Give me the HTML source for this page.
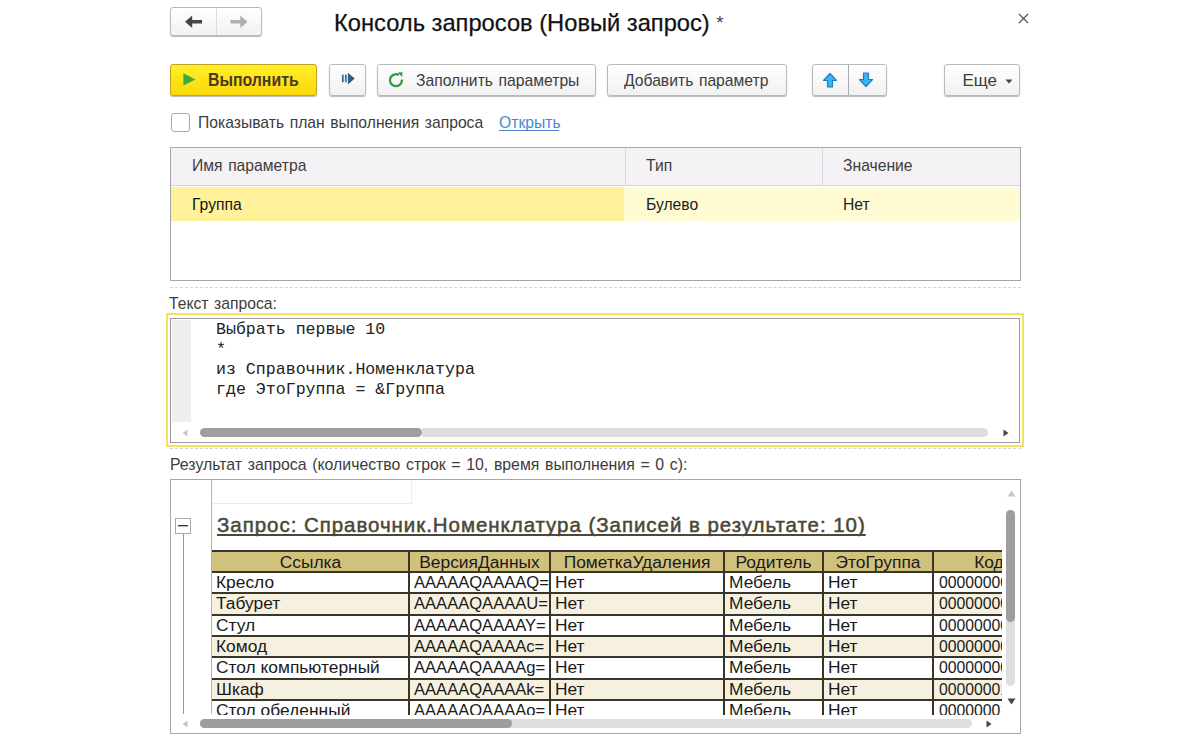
<!DOCTYPE html>
<html lang="ru"><head><meta charset="utf-8"><title>Консоль запросов</title>
<style>
*{box-sizing:border-box;margin:0;padding:0}
html,body{width:1200px;height:744px;overflow:hidden;background:#fff}
body{font-family:"Liberation Sans",sans-serif;color:#333;position:relative;font-size:15px}
.abs{position:absolute}
.btn{position:absolute;top:64px;height:32px;border:1px solid #b9b9b9;border-radius:3px;background:linear-gradient(#ffffff,#f1f1f1);box-shadow:0 1px 1px rgba(0,0,0,.28)}
.t{position:absolute;white-space:nowrap;transform-origin:0 0}
.u{word-spacing:1.3px}
.hd{font-size:20.5px;line-height:26px;color:#4a4836;letter-spacing:.95px;-webkit-text-stroke:.5px #4a4836;text-decoration:underline;text-decoration-thickness:1.5px;text-underline-offset:2px;text-decoration-skip-ink:none}
.ct{font-size:16px;line-height:20px;color:#1a1a1a;transform:scaleX(1.085)}
.b64{transform:scaleX(1.035)}
.cd{transform:scaleX(.985);margin-left:1px}
</style></head><body>

<div class="btn" style="left:170px;top:7px;width:92px;height:29px"></div>
<div class="abs" style="left:216px;top:8px;width:1px;height:27px;background:#dcdcdc"></div>
<svg class="abs" style="left:184px;top:14px" width="20" height="16" viewBox="0 0 20 16"><path d="M1 7.8 L8.2 1.6 L8.2 6 L18 6 L18 9.6 L8.2 9.6 L8.2 14 Z" fill="#454545"/></svg>
<svg class="abs" style="left:229px;top:14px" width="20" height="16" viewBox="0 0 20 16"><path d="M18.5 7.8 L11.3 1.6 L11.3 6 L1.5 6 L1.5 9.6 L11.3 9.6 L11.3 14 Z" fill="#b0b0b0"/></svg>

<div class="t " style="left:333.8px;top:9.08px;font-size:24px;line-height:28px;color:#111;transform:scaleX(0.987);-webkit-text-stroke:.25px #111;">Консоль запросов (Новый запрос) <span style="font-size:19px;color:#444;-webkit-text-stroke:0;position:relative;top:-2px">*</span></div>
<svg class="abs" style="left:1018px;top:13px" width="11" height="11" viewBox="0 0 11 11"><path d="M1 1 L10 10 M10 1 L1 10" stroke="#555" stroke-width="1.3" fill="none"/></svg>
<div class="btn" style="left:170px;width:147px;border-color:#c2a223;background:linear-gradient(#fff02c,#fee317 50%,#fbd90c)"></div>
<div class="t " style="left:208px;top:69.80px;font-size:17.6px;line-height:20px;color:#4a3c1c;transform:scaleX(0.9);font-weight:bold;">Выполнить</div>
<svg class="abs" style="left:182px;top:72px" width="15" height="15" viewBox="0 0 15 15"><path d="M1.4 1.2 L13.4 7.4 L1.4 13.6 Z" fill="#35ad3a"/></svg>
<div class="btn" style="left:329px;width:37px"></div>
<svg class="abs" style="left:340px;top:71px" width="16" height="16" viewBox="0 0 16 16"><rect x="1.9" y="3.6" width="1.85" height="7.6" fill="#41709e"/><rect x="4.9" y="3.6" width="1.85" height="7.6" fill="#41709e"/><path d="M7.9 1.75 L14.7 7.6 L7.9 13.4 Z" fill="#2f5b88"/></svg>
<div class="btn" style="left:377px;width:219px"></div>
<svg class="abs" style="left:387px;top:71px" width="18" height="18" viewBox="0 0 18 18"><path d="M11.9 4.0 A6 6 0 1 0 14.9 8.7" stroke="#2f9a3e" stroke-width="2.3" fill="none"/><path d="M10.9 1.5 L15.5 1.3 L15.1 6.0 Z" fill="#2f9a3e"/></svg>
<div class="btn" style="left:607px;width:180px"></div>
<div class="btn" style="left:812px;width:75px"></div>
<div class="abs" style="left:848px;top:65px;width:1px;height:30px;background:#ababab"></div>
<svg class="abs" style="left:822px;top:72px" width="16" height="17" viewBox="0 0 16 17"><path d="M8 1.5 L14.5 8.5 L10.5 8.5 L10.5 15 L5.5 15 L5.5 8.5 L1.5 8.5 Z" fill="#3db4f2" stroke="#1b7fc4" stroke-width="1.2" stroke-linejoin="round"/></svg>
<svg class="abs" style="left:858px;top:71px" width="16" height="17" viewBox="0 0 16 17"><path d="M8 15.5 L14.5 8.5 L10.5 8.5 L10.5 2 L5.5 2 L5.5 8.5 L1.5 8.5 Z" fill="#3db4f2" stroke="#1b7fc4" stroke-width="1.2" stroke-linejoin="round"/></svg>
<div class="btn" style="left:944px;width:76px"></div>
<svg class="abs" style="left:1005px;top:79px" width="8" height="5" viewBox="0 0 8 5"><path d="M0.5 0.5 L7.5 0.5 L4 4.5 Z" fill="#444"/></svg>

<div class="t u" style="left:415.6px;top:71.15px;font-size:16.6px;line-height:20px;color:#3c3c3c;transform:scaleX(0.945);">Заполнить параметры</div>
<div class="t u" style="left:624.4px;top:71.15px;font-size:16.6px;line-height:20px;color:#3c3c3c;transform:scaleX(0.945);">Добавить параметр</div>
<div class="t u" style="left:962.4px;top:71.01px;font-size:17px;line-height:20px;color:#3c3c3c;transform:scaleX(1.0);">Еще</div>
<div class="abs" style="left:171px;top:113px;width:19px;height:19px;border:1px solid #a9a9a9;border-radius:3px;background:#fff"></div>
<div class="t u" style="left:198px;top:112.75px;font-size:16.6px;line-height:20px;color:#3c3c3c;transform:scaleX(0.945);">Показывать план выполнения запроса</div>
<div class="t u" style="left:499px;top:112.75px;font-size:16.6px;line-height:20px;color:#4a86d0;transform:scaleX(0.945);">Открыть</div>
<div class="abs" style="left:499px;top:130px;width:60px;height:1px;background:#4a86d0"></div>
<div class="abs" style="left:170px;top:147px;width:851px;height:134px;border:1px solid #a6a6a6;background:#fff"></div>
<div class="abs" style="left:171px;top:148px;width:849px;height:38px;background:#f4f2f5;border-bottom:1px solid #d6d3dc"></div>
<div class="abs" style="left:625px;top:148px;width:1px;height:37px;background:#d9d6de"></div>
<div class="abs" style="left:822px;top:148px;width:1px;height:37px;background:#d9d6de"></div>
<div class="abs" style="left:171px;top:187px;width:849px;height:34px;background:#fffbd2"></div>
<div class="abs" style="left:171px;top:187px;width:453px;height:34px;background:#fff29a"></div>

<div class="t u" style="left:191.6px;top:156.35px;font-size:16.6px;line-height:20px;color:#3c3c3c;transform:scaleX(0.945);">Имя параметра</div>
<div class="t u" style="left:646px;top:156.35px;font-size:16.6px;line-height:20px;color:#3c3c3c;transform:scaleX(0.945);">Тип</div>
<div class="t u" style="left:843px;top:156.35px;font-size:16.6px;line-height:20px;color:#3c3c3c;transform:scaleX(0.945);">Значение</div>
<div class="t u" style="left:191.6px;top:194.55px;font-size:16.6px;line-height:20px;color:#111;transform:scaleX(0.945);">Группа</div>
<div class="t u" style="left:646px;top:194.55px;font-size:16.6px;line-height:20px;color:#222;transform:scaleX(0.945);">Булево</div>
<div class="t u" style="left:843px;top:194.55px;font-size:16.6px;line-height:20px;color:#222;transform:scaleX(0.945);">Нет</div>
<div class="abs" style="left:170px;top:287px;width:851px;height:0;border-top:1px dashed #d4d4d4"></div>
<div class="t u" style="left:169.2px;top:293.55px;font-size:16.6px;line-height:20px;color:#3c3c3c;transform:scaleX(0.945);">Текст запроса:</div>
<div class="abs" style="left:166px;top:313px;width:858px;height:134px;border:2px solid #f4e25e;background:#fff"></div>
<div class="abs" style="left:170px;top:318px;width:850px;height:125px;border:1px solid #9a9a9a;background:#fff"></div>
<div class="abs" style="left:172px;top:320px;width:19px;height:102px;background:#efefef"></div>
<pre class="abs" style="left:216px;top:320.3px;font-family:'Liberation Mono',monospace;font-size:16.6px;line-height:20px;color:#222">Выбрать первые 10
*
из Справочник.Номенклатура
где ЭтоГруппа = &amp;Группа</pre>
<div class="abs" style="left:200px;top:428px;width:222px;height:9px;border-radius:5px;background:#9e9e9e"></div>
<div class="abs" style="left:422px;top:428px;width:566px;height:9px;border-radius:0 5px 5px 0;background:#dedede"></div>
<svg class="abs" style="left:182px;top:429px" width="6" height="8" viewBox="0 0 6 8"><path d="M5.5 0.5 L0.5 4 L5.5 7.5 Z" fill="#c4c4c4"/></svg>
<svg class="abs" style="left:1003px;top:429px" width="6" height="8" viewBox="0 0 6 8"><path d="M0.5 0.5 L5.5 4 L0.5 7.5 Z" fill="#444"/></svg>
<div class="abs" style="left:170px;top:448px;width:851px;height:0;border-top:1px dashed #d4d4d4"></div>

<div class="t u" style="left:170.2px;top:455.15px;font-size:16.6px;line-height:20px;color:#3c3c3c;transform:scaleX(0.954);">Результат запроса (количество строк = 10, время выполнения = 0 с):</div>
<div class="abs" style="left:170px;top:479px;width:851px;height:255px;border:1px solid #a6a6a6;background:#fff"></div>
<div class="abs" style="left:211px;top:480px;width:1px;height:234px;background:#b5b5b5"></div>
<div class="abs" style="left:212px;top:480px;width:200px;height:24px;border-right:1px solid #ececec;border-bottom:1px solid #ececec"></div>
<div class="abs" style="left:183px;top:533px;width:1px;height:181px;background:#9a9a9a"></div>
<div class="abs" style="left:175px;top:518px;width:16px;height:16px;border:1px solid #a8a8a8;background:#fff"></div>
<div class="abs" style="left:178px;top:525px;width:10px;height:1px;background:#333;box-shadow:0 1px 0 #bbb"></div>
<div class="t hd" style="left:217px;top:512.3px">Запрос: Справочник.Номенклатура (Записей в результате: 10)</div>
<div class="abs" style="left:212px;top:550px;width:790px;height:165px;overflow:hidden">
<div class="abs" style="left:0;top:0;width:840px;height:23px;background:#d0c27c"></div>
<div class="abs" style="left:0;top:43px;width:840px;height:22px;background:#f6f1df"></div>
<div class="abs" style="left:0;top:86px;width:840px;height:21px;background:#f6f1df"></div>
<div class="abs" style="left:0;top:129px;width:840px;height:21px;background:#f6f1df"></div>
<div class="abs" style="left:0;top:171px;width:840px;height:22px;background:#f6f1df"></div>
<div class="abs" style="left:0;top:0px;width:840px;height:2px;background:#3a352a"></div>
<div class="abs" style="left:0;top:21px;width:840px;height:2px;background:#3a352a"></div>
<div class="abs" style="left:0;top:42px;width:840px;height:2px;background:#3a352a"></div>
<div class="abs" style="left:0;top:64px;width:840px;height:2px;background:#3a352a"></div>
<div class="abs" style="left:0;top:85px;width:840px;height:2px;background:#3a352a"></div>
<div class="abs" style="left:0;top:106px;width:840px;height:2px;background:#3a352a"></div>
<div class="abs" style="left:0;top:128px;width:840px;height:2px;background:#3a352a"></div>
<div class="abs" style="left:0;top:149px;width:840px;height:2px;background:#3a352a"></div>
<div class="abs" style="left:0;top:170px;width:840px;height:2px;background:#3a352a"></div>
<div class="abs" style="left:0;top:192px;width:840px;height:2px;background:#3a352a"></div>
<div class="abs" style="left:196px;top:0;width:2px;height:200px;background:#3a352a"></div>
<div class="abs" style="left:337px;top:0;width:2px;height:200px;background:#3a352a"></div>
<div class="abs" style="left:511px;top:0;width:2px;height:200px;background:#3a352a"></div>
<div class="abs" style="left:610px;top:0;width:2px;height:200px;background:#3a352a"></div>
<div class="abs" style="left:720px;top:0;width:2px;height:200px;background:#3a352a"></div>
<div class="abs" style="left:832px;top:0;width:2px;height:200px;background:#3a352a"></div>
<div class="t ct" style="left:0px;top:3px;width:197px;text-align:center;transform-origin:50% 0">Ссылка</div>
<div class="t ct" style="left:197px;top:3px;width:141px;text-align:center;transform-origin:50% 0">ВерсияДанных</div>
<div class="t ct" style="left:338px;top:3px;width:174px;text-align:center;transform-origin:50% 0">ПометкаУдаления</div>
<div class="t ct" style="left:512px;top:3px;width:99px;text-align:center;transform-origin:50% 0">Родитель</div>
<div class="t ct" style="left:611px;top:3px;width:110px;text-align:center;transform-origin:50% 0">ЭтоГруппа</div>
<div class="t ct" style="left:721px;top:3px;width:112px;text-align:center;transform-origin:50% 0">Код</div>
<div class="t ct" style="left:4px;top:23.4px">Кресло</div>
<div class="t ct b64" style="left:202.2px;top:23.4px">AAAAAQAAAAQ=</div>
<div class="t ct" style="left:343.2px;top:23.4px">Нет</div>
<div class="t ct" style="left:517.2px;top:23.4px">Мебель</div>
<div class="t ct" style="left:616.2px;top:23.4px">Нет</div>
<div class="t ct cd" style="left:726.2px;top:23.4px">000000005</div>
<div class="t ct" style="left:4px;top:44.4px">Табурет</div>
<div class="t ct b64" style="left:202.2px;top:44.4px">AAAAAQAAAAU=</div>
<div class="t ct" style="left:343.2px;top:44.4px">Нет</div>
<div class="t ct" style="left:517.2px;top:44.4px">Мебель</div>
<div class="t ct" style="left:616.2px;top:44.4px">Нет</div>
<div class="t ct cd" style="left:726.2px;top:44.4px">000000006</div>
<div class="t ct" style="left:4px;top:66.4px">Стул</div>
<div class="t ct b64" style="left:202.2px;top:66.4px">AAAAAQAAAAY=</div>
<div class="t ct" style="left:343.2px;top:66.4px">Нет</div>
<div class="t ct" style="left:517.2px;top:66.4px">Мебель</div>
<div class="t ct" style="left:616.2px;top:66.4px">Нет</div>
<div class="t ct cd" style="left:726.2px;top:66.4px">000000007</div>
<div class="t ct" style="left:4px;top:87.4px">Комод</div>
<div class="t ct b64" style="left:202.2px;top:87.4px">AAAAAQAAAAc=</div>
<div class="t ct" style="left:343.2px;top:87.4px">Нет</div>
<div class="t ct" style="left:517.2px;top:87.4px">Мебель</div>
<div class="t ct" style="left:616.2px;top:87.4px">Нет</div>
<div class="t ct cd" style="left:726.2px;top:87.4px">000000008</div>
<div class="t ct" style="left:4px;top:108.4px">Стол компьютерный</div>
<div class="t ct b64" style="left:202.2px;top:108.4px">AAAAAQAAAAg=</div>
<div class="t ct" style="left:343.2px;top:108.4px">Нет</div>
<div class="t ct" style="left:517.2px;top:108.4px">Мебель</div>
<div class="t ct" style="left:616.2px;top:108.4px">Нет</div>
<div class="t ct cd" style="left:726.2px;top:108.4px">000000009</div>
<div class="t ct" style="left:4px;top:130.4px">Шкаф</div>
<div class="t ct b64" style="left:202.2px;top:130.4px">AAAAAQAAAAk=</div>
<div class="t ct" style="left:343.2px;top:130.4px">Нет</div>
<div class="t ct" style="left:517.2px;top:130.4px">Мебель</div>
<div class="t ct" style="left:616.2px;top:130.4px">Нет</div>
<div class="t ct cd" style="left:726.2px;top:130.4px">000000010</div>
<div class="t ct" style="left:4px;top:151.4px">Стол обеденный</div>
<div class="t ct b64" style="left:202.2px;top:151.4px">AAAAAQAAAAo=</div>
<div class="t ct" style="left:343.2px;top:151.4px">Нет</div>
<div class="t ct" style="left:517.2px;top:151.4px">Мебель</div>
<div class="t ct" style="left:616.2px;top:151.4px">Нет</div>
<div class="t ct cd" style="left:726.2px;top:151.4px">000000011</div>
<div class="t ct" style="left:4px;top:172.4px">Диван</div>
<div class="t ct b64" style="left:202.2px;top:172.4px">AAAAAQAAAAs=</div>
<div class="t ct" style="left:343.2px;top:172.4px">Нет</div>
<div class="t ct" style="left:517.2px;top:172.4px">Мебель</div>
<div class="t ct" style="left:616.2px;top:172.4px">Нет</div>
<div class="t ct cd" style="left:726.2px;top:172.4px">000000012</div>
</div>
<svg class="abs" style="left:1007px;top:490px" width="9" height="7" viewBox="0 0 9 7"><path d="M0.5 6.5 L4.5 0.5 L8.5 6.5 Z" fill="#c8c8c8"/></svg>
<div class="abs" style="left:1006px;top:510px;width:9px;height:176px;border-radius:5px;background:#dedede"></div>
<div class="abs" style="left:1006px;top:510px;width:9px;height:112px;border-radius:5px;background:#9e9e9e"></div>
<svg class="abs" style="left:1007px;top:698px" width="9" height="7" viewBox="0 0 9 7"><path d="M0.5 0.5 L4.5 6.5 L8.5 0.5 Z" fill="#444"/></svg>
<div class="abs" style="left:200px;top:719px;width:772px;height:9px;border-radius:5px;background:#dedede"></div>
<div class="abs" style="left:200px;top:719px;width:312px;height:9px;border-radius:5px;background:#9e9e9e"></div>
<svg class="abs" style="left:182px;top:720px" width="6" height="8" viewBox="0 0 6 8"><path d="M5.5 0.5 L0.5 4 L5.5 7.5 Z" fill="#c4c4c4"/></svg>
<svg class="abs" style="left:986px;top:720px" width="6" height="8" viewBox="0 0 6 8"><path d="M0.5 0.5 L5.5 4 L0.5 7.5 Z" fill="#444"/></svg>
</body></html>
